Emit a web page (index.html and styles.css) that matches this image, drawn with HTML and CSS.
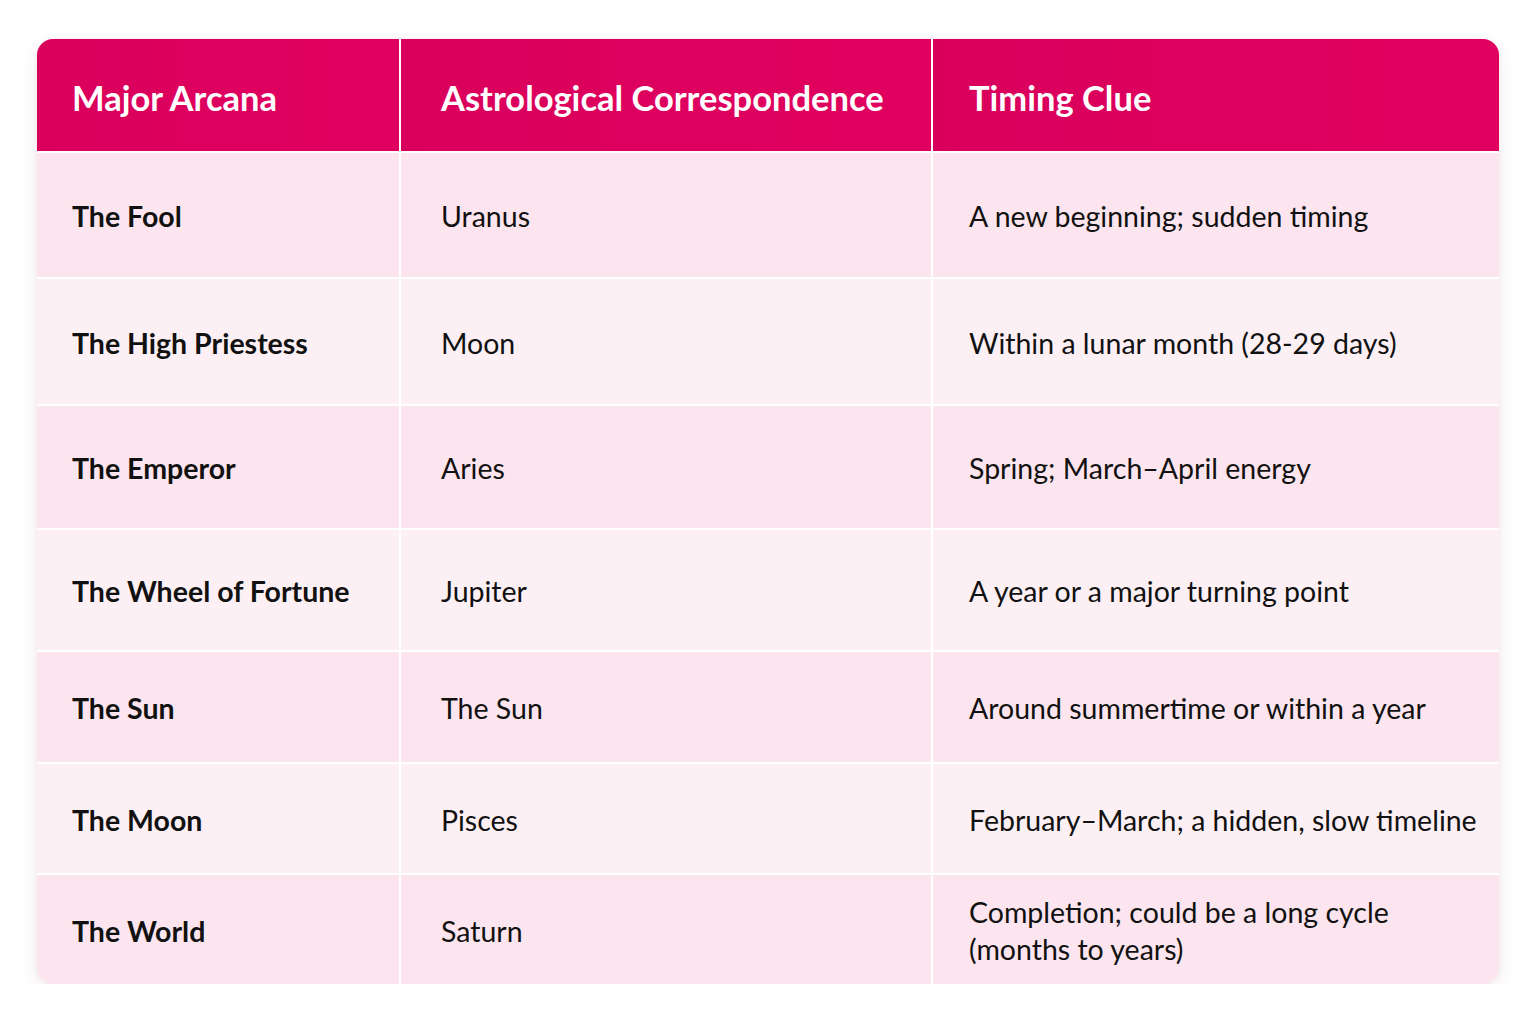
FILE: index.html
```html
<!DOCTYPE html>
<html lang="en">
<head>
<meta charset="utf-8">
<title>Major Arcana Timing</title>
<link rel="stylesheet" href="styles.css">
</head>
<body>
<div class="page">
  <div class="table">
    <div class="cell head c1">Major Arcana</div>
    <div class="cell head c2">Astrological Correspondence</div>
    <div class="cell head c3">Timing Clue</div>

    <div class="cell odd c1 name">The Fool</div>
    <div class="cell odd c2">Uranus</div>
    <div class="cell odd c3">A new beginning; sudden timing</div>

    <div class="cell even c1 name">The High Priestess</div>
    <div class="cell even c2">Moon</div>
    <div class="cell even c3">Within a lunar month (28-29 days)</div>

    <div class="cell odd c1 name">The Emperor</div>
    <div class="cell odd c2">Aries</div>
    <div class="cell odd c3">Spring; March–April energy</div>

    <div class="cell even c1 name">The Wheel of Fortune</div>
    <div class="cell even c2">Jupiter</div>
    <div class="cell even c3">A year or a major turning point</div>

    <div class="cell odd c1 name">The Sun</div>
    <div class="cell odd c2">The Sun</div>
    <div class="cell odd c3">Around summertime or within a year</div>

    <div class="cell even c1 name">The Moon</div>
    <div class="cell even c2">Pisces</div>
    <div class="cell even c3">February–March; a hidden, slow timeline</div>

    <div class="cell odd c1 name">The World</div>
    <div class="cell odd c2">Saturn</div>
    <div class="cell odd c3">Completion; could be a long cycle<br>(months to years)</div>
  </div>
</div>
</body>
</html>
```
FILE: styles.css
```css
* { box-sizing: border-box; }
html, body {
  margin: 0;
  padding: 0;
  background: #ffffff;
}
body {
  font-family: "Lato", "Noto Sans", sans-serif;
  color: #111111;
}
.page {
  padding: 39px 37px 0 37px;
}
.table {
  width: 1462px;
  display: grid;
  grid-template-columns: 362px 530px 566px;
  grid-template-rows: 112px 124px 125px 122px 120px 110px 109px 109px;
  gap: 2px;
  background: #ffffff;
  border-radius: 16px;
  overflow: hidden;
  box-shadow: 0 6px 18px rgba(120, 40, 70, 0.10), 0 0 4px rgba(120, 40, 70, 0.05);
}
.cell {
  display: flex;
  align-items: center;
  font-size: 28.5px;
  line-height: 37px;
  font-weight: 400;
  padding-top: 3px;
}
.c1 { padding-left: 35px; }
.c2 { padding-left: 40px; }
.c3 { padding-left: 36px; white-space: nowrap; }
.head {
  background: linear-gradient(90deg, #d9005c 0%, #de005e 50%, #e0005f 100%);
  color: #ffffff;
  font-size: 34.5px;
  font-weight: 700;
  padding-top: 4px;
}
.odd { background: #fce5ee; }
.even { background: #fdf0f5; }
.name { font-weight: 700; }
```
